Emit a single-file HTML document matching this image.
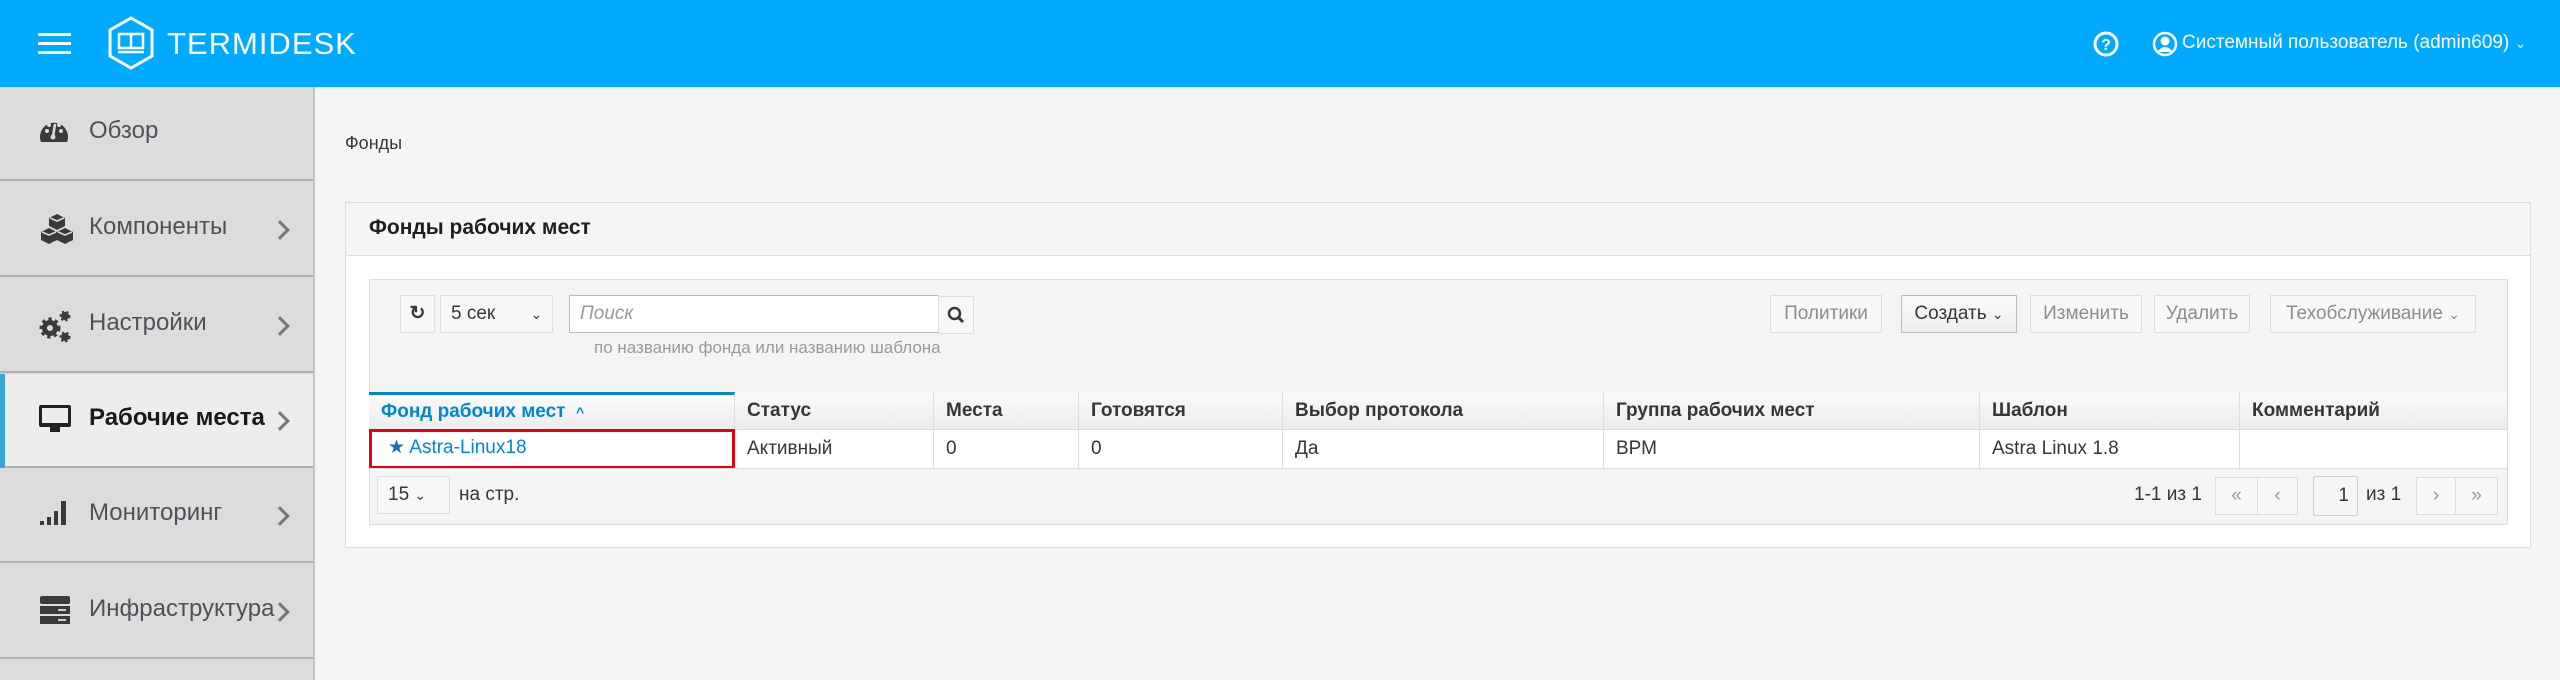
<!DOCTYPE html>
<html><head><meta charset="utf-8"><style>
*{box-sizing:border-box;margin:0;padding:0}
body{width:2560px;height:680px;overflow:hidden;background:#f5f5f5;font-family:"Liberation Sans",sans-serif;color:#363636;position:relative}
.a{position:absolute}
.hdr{left:0;top:0;width:2560px;height:87px;background:#00abff}
.side{left:0;top:87px;width:315px;height:593px;background:#dcdcdc;border-right:2px solid #c4c4c4}
.row{position:absolute;left:0;width:313px;height:94px;border-bottom:2px solid #b0b0b0;font-size:24px;color:#4d5258}
.row span{position:absolute;left:89px;top:30px}
.row svg.ic{position:absolute;left:38px;top:30px}
.chev{position:absolute;left:273px;top:40px;width:14px;height:14px;border-right:3px solid #777;border-top:3px solid #777;transform:rotate(45deg)}
.btn{position:absolute;border:1px solid #ddd;background:#f7f7f7;font-size:19px;color:#8b8d8f;text-align:center;line-height:36px;height:38px}
.th{position:absolute;top:392px;height:38px;border-right:1px solid #ddd;font-size:19px;font-weight:bold;color:#363636;line-height:38px;padding-left:12px;background:linear-gradient(#fafafa,#ececec)}
.td{position:absolute;top:430px;height:38px;border-right:1px solid #ddd;font-size:19px;line-height:38px;padding-left:12px;background:#fff}
</style></head><body>
<div class="a hdr">
 <div class="a" style="left:38px;top:33px;width:33px;height:3px;background:#fff"></div>
 <div class="a" style="left:38px;top:42px;width:33px;height:3px;background:#fff"></div>
 <div class="a" style="left:38px;top:51px;width:33px;height:3px;background:#fff"></div>
 <svg class="a" style="left:107px;top:16px" width="48" height="54" viewBox="0 0 48 54"><path d="M24 2 L45 14 L45 40 L24 52 L3 40 L3 14 Z" fill="none" stroke="#fff" stroke-width="3"/><rect x="12" y="18" width="24" height="14" fill="none" stroke="#fff" stroke-width="2.5"/><line x1="24" y1="18" x2="24" y2="32" stroke="#fff" stroke-width="2.5"/><line x1="11" y1="36" x2="37" y2="36" stroke="#fff" stroke-width="2.5"/></svg>
 <div class="a" style="left:167px;top:26px;font-size:31px;color:#fff;letter-spacing:1px">TERMIDESK</div>
 <svg class="a" style="left:2093px;top:31px" width="26" height="26" viewBox="0 0 26 26"><circle cx="13" cy="13" r="11" fill="none" stroke="#fff" stroke-width="3"/><text x="13" y="19" font-size="16" font-weight="bold" fill="#fff" text-anchor="middle" font-family="Liberation Sans">?</text></svg>
 <svg class="a" style="left:2152px;top:31px" width="26" height="26" viewBox="0 0 26 26"><circle cx="13" cy="13" r="11" fill="none" stroke="#fff" stroke-width="2.5"/><circle cx="13" cy="10" r="4.5" fill="#fff"/><path d="M5 21 Q13 11 21 21 Z" fill="#fff"/></svg>
 <div class="a" style="left:2182px;top:32px;font-size:19px;color:#fff">Системный пользователь (admin609) <span style="font-size:14px">&#8964;</span></div>
</div>
<div class="a side">
 <div class="row" style="top:0;"><svg class="ic" width="32" height="28" viewBox="0 0 32 28"><path d="M3 25 A14 14 0 1 1 29 25 Z" fill="#3a3a3a"/><circle cx="9" cy="14" r="2" fill="#dcdcdc"/><circle cx="11" cy="8" r="2" fill="#dcdcdc"/><circle cx="21" cy="8" r="2" fill="#dcdcdc"/><circle cx="23" cy="14" r="2" fill="#dcdcdc"/><path d="M17 7 L15 20" stroke="#dcdcdc" stroke-width="2.5"/><circle cx="15" cy="20" r="2.5" fill="#dcdcdc"/></svg><span>Обзор</span></div>
 <div class="row" style="top:96px;"><svg class="ic" width="38" height="32" viewBox="0 0 38 32"><path d="M19 1 L27 5 L27 13 L19 17 L11 13 L11 5 Z" fill="#3a3a3a"/><path d="M11 15 L19 19 L19 27 L11 31 L3 27 L3 19 Z" fill="#3a3a3a"/><path d="M27 15 L35 19 L35 27 L27 31 L19 27 L19 19 Z" fill="#3a3a3a"/><path d="M12 5 L19 8 L26 5 M4 19 L11 22 L18 19 M20 19 L27 22 L34 19" stroke="#dcdcdc" stroke-width="1.5" fill="none"/></svg><span>Компоненты</span><div class="chev"></div></div>
 <div class="row" style="top:192px;"><svg class="ic" width="34" height="34" viewBox="0 0 34 34"><circle cx="12" cy="19" r="8" fill="#3a3a3a" stroke="#3a3a3a" stroke-width="5" stroke-dasharray="3 3"/><circle cx="12" cy="19" r="3" fill="#dcdcdc"/><circle cx="27" cy="7" r="4" fill="#3a3a3a" stroke="#3a3a3a" stroke-width="3" stroke-dasharray="2 2"/><circle cx="27" cy="28" r="4" fill="#3a3a3a" stroke="#3a3a3a" stroke-width="3" stroke-dasharray="2 2"/></svg><span>Настройки</span><div class="chev"></div></div>
 <div class="row" style="top:287px;background:#ededed;color:#1a1a1a;font-weight:bold"><div class="a" style="left:0;top:0;width:5px;height:94px;background:#39a5dc"></div><svg class="ic" width="34" height="30" viewBox="0 0 34 30"><rect x="1" y="1" width="32" height="22" rx="2" fill="#222"/><rect x="4" y="4" width="26" height="15" fill="#ededed"/><rect x="12" y="23" width="10" height="5" fill="#222"/></svg><span>Рабочие места</span><div class="chev"></div></div>
 <div class="row" style="top:382px;"><svg class="ic" width="32" height="28" viewBox="0 0 32 28"><rect x="2" y="22" width="4" height="4" fill="#3a3a3a"/><rect x="9" y="18" width="4" height="8" fill="#3a3a3a"/><rect x="16" y="12" width="4" height="14" fill="#3a3a3a"/><rect x="23" y="2" width="5" height="24" fill="#3a3a3a"/></svg><span>Мониторинг</span><div class="chev"></div></div>
 <div class="row" style="top:478px;"><svg class="ic" width="32" height="30" viewBox="0 0 32 30"><rect x="2" y="1" width="30" height="8" rx="2" fill="#3a3a3a"/><rect x="2" y="11" width="30" height="8" fill="#3a3a3a"/><rect x="2" y="21" width="30" height="8" fill="#3a3a3a"/><path d="M20 15h8 M20 25h8" stroke="#ccc" stroke-width="2"/></svg><span>Инфраструктура</span><div class="chev"></div></div>
</div>
<div class="a" style="left:345px;top:133px;font-size:18px;color:#363636">Фонды</div>
<div class="a" style="left:345px;top:202px;width:2186px;height:346px;background:#fff;border:1px solid #ddd"></div>
<div class="a" style="left:346px;top:203px;width:2184px;height:53px;background:#f5f5f5;border-bottom:1px solid #ddd"></div>
<div class="a" style="left:369px;top:216px;font-size:21px;font-weight:bold;color:#1f1f1f">Фонды рабочих мест</div>
<div class="a" style="left:369px;top:279px;width:2139px;height:246px;background:#f4f4f4;border:1px solid #ddd"></div>
<div class="btn" style="left:400px;top:295px;width:35px;color:#363636;font-weight:bold">&#8635;</div>
<div class="btn" style="left:440px;top:295px;width:113px;color:#363636;text-align:left;padding-left:10px">5 сек <span style="margin-left:30px;font-size:14px">&#8964;</span></div>
<div class="a" style="left:569px;top:295px;width:370px;height:38px;background:#fff;border:1px solid #bbb;font-size:19px;font-style:italic;color:#9a9a9a;line-height:36px;padding-left:10px">Поиск</div>
<div class="btn" style="left:938px;top:296px;width:36px;color:#363636"><svg width="18" height="18" viewBox="0 0 18 18" style="margin-top:9px"><circle cx="7.5" cy="7.5" r="5.5" fill="none" stroke="#363636" stroke-width="2.5"/><path d="M11 11 L16 16" stroke="#363636" stroke-width="3"/></svg></div>
<div class="a" style="left:594px;top:338px;font-size:17px;color:#9a9a9a">по названию фонда или названию шаблона</div>
<div class="btn" style="left:1770px;top:295px;width:112px">Политики</div>
<div class="btn" style="left:1901px;top:295px;width:116px;color:#363636;background:linear-gradient(#fafafa,#ededed);border-color:#bbb">Создать <span style="font-size:14px">&#8964;</span></div>
<div class="btn" style="left:2030px;top:295px;width:112px">Изменить</div>
<div class="btn" style="left:2154px;top:295px;width:96px">Удалить</div>
<div class="btn" style="left:2270px;top:295px;width:206px">Техобслуживание <span style="font-size:14px">&#8964;</span></div>
<div class="th" style="left:369px;width:366px;color:#0088ce;border-top:3px solid #0088ce;padding-top:0;line-height:34px">Фонд рабочих мест &nbsp;<span style="font-size:14px">^</span></div>
<div class="th" style="left:735px;width:199px">Статус</div>
<div class="th" style="left:934px;width:145px">Места</div>
<div class="th" style="left:1079px;width:204px">Готовятся</div>
<div class="th" style="left:1283px;width:321px">Выбор протокола</div>
<div class="th" style="left:1604px;width:376px">Группа рабочих мест</div>
<div class="th" style="left:1980px;width:260px">Шаблон</div>
<div class="th" style="left:2240px;width:267px;border-right:none">Комментарий</div>
<div class="a" style="left:369px;top:429px;width:2138px;height:1px;background:#ddd"></div>
<div class="td" style="left:369px;width:366px;color:#0088ce;border:3px solid #e3000f;line-height:32px;padding-left:16px;top:429px;height:40px"><span style="color:#1b6fb5">&#9733;</span> Astra-Linux18</div>
<div class="td" style="left:735px;width:199px">Активный</div>
<div class="td" style="left:934px;width:145px">0</div>
<div class="td" style="left:1079px;width:204px">0</div>
<div class="td" style="left:1283px;width:321px">Да</div>
<div class="td" style="left:1604px;width:376px">ВРМ</div>
<div class="td" style="left:1980px;width:260px">Astra Linux 1.8</div>
<div class="td" style="left:2240px;width:267px;border-right:none"></div>
<div class="a" style="left:369px;top:468px;width:2138px;height:1px;background:#ddd"></div>
<div class="btn" style="left:377px;top:476px;width:73px;color:#363636;text-align:left;padding-left:10px">15 <span style="font-size:14px">&#8964;</span></div>
<div class="a" style="left:459px;top:484px;font-size:19px">на стр.</div>
<div class="a" style="left:2134px;top:484px;font-size:19px">1-1 из 1</div>
<div class="btn" style="left:2215px;top:477px;width:43px;color:#999">&laquo;</div>
<div class="btn" style="left:2257px;top:477px;width:41px;color:#999">&lsaquo;</div>
<div class="a" style="left:2313px;top:476px;width:45px;height:40px;background:#f5f5f5;border:1px solid #ccc;border-radius:2px;font-size:19px;text-align:right;padding-right:8px;line-height:38px">1</div>
<div class="a" style="left:2366px;top:484px;font-size:19px">из 1</div>
<div class="btn" style="left:2416px;top:477px;width:40px;color:#999">&rsaquo;</div>
<div class="btn" style="left:2455px;top:477px;width:43px;color:#999">&raquo;</div>
</body></html>
